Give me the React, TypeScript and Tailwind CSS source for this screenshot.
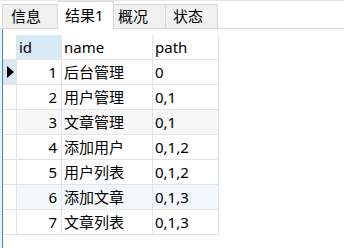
import React from "react";

const rows = [
  { id: 1, name: "后台管理", path: "0" },
  { id: 2, name: "用户管理", path: "0,1" },
  { id: 3, name: "文章管理", path: "0,1" },
  { id: 4, name: "添加用户", path: "0,1,2" },
  { id: 5, name: "用户列表", path: "0,1,2" },
  { id: 6, name: "添加文章", path: "0,1,3" },
  { id: 7, name: "文章列表", path: "0,1,3" },
];

export default function App() {
  const font = { fontFamily: '"Noto Sans", "Noto Sans CJK SC", sans-serif' };
  return (
    <div
      className="w-[344px] h-[248px] bg-white overflow-hidden flex flex-col text-[15px] text-black leading-none"
      style={font}
    >
      {/* tab bar */}
      <div className="h-[29px] shrink-0 flex items-end border-t border-t-[#e6e6e6] border-b border-b-[#d9d9d9] pl-[2px] bg-white">
        <div className="w-[56px] h-[25px] -mb-px bg-[#f0f0f0] border border-[#d9d9d9] flex items-center pl-[8px]">
          信息
        </div>
        <div className="w-[56px] h-[28px] -mb-px bg-white border border-b-0 border-[#d9d9d9] border-l-0 flex items-center pl-[7px] pb-[1px]">
          结果1
        </div>
        <div className="w-[52px] h-[25px] -mb-px bg-[#f0f0f0] border border-l-0 border-[#d9d9d9] flex items-center pl-[4px]">
          概况
        </div>
        <div className="w-[52px] h-[25px] -mb-px bg-[#f0f0f0] border border-l-0 border-[#d9d9d9] flex items-center pl-[7px]">
          状态
        </div>
      </div>

      {/* body */}
      <div className="flex-1 flex">
        <div className="w-[2px] bg-[#f0f0f0]" />
        <div className="w-px bg-[#2f8ae5]" />
        <div className="pt-[6px]">
          <div className="grid grid-cols-[14px_45px_91px_66px]">
            {/* header */}
            <div className="h-[25px] border-r border-b border-[#e3e3e3] bg-white" />
            <div className="h-[25px] border-r border-b border-[#e3e3e3] bg-[#d9e9f7] flex items-center pl-[2px]">
              id
            </div>
            <div className="h-[25px] border-r border-b border-[#e3e3e3] bg-white flex items-center pl-[2px]">
              name
            </div>
            <div className="h-[25px] border-r border-b border-[#e3e3e3] bg-white flex items-center pl-[2px]">
              path
            </div>
            {rows.map((r, i) => {
              const bg =
                r.id === 3 ? "bg-[#f7f7f7]" : r.id === 6 ? "bg-[#f3f8fd]" : "bg-white";
              return (
                <React.Fragment key={r.id}>
                  <div
                    className={
                      i === 0
                        ? "h-[25px] border-r border-b border-[#e3e3e3] bg-[#d9e9f7] flex items-center pl-[4px]"
                        : "h-[25px] border-r border-b border-[#e3e3e3] bg-white"
                    }
                  >
                    {i === 0 && (
                      <svg width="7" height="12" viewBox="0 0 7 12">
                        <path d="M0 0 L7 6 L0 12 Z" fill="#000" />
                      </svg>
                    )}
                  </div>
                  <div className={`h-[25px] border-r border-b border-[#e3e3e3] ${bg} flex items-center justify-end pr-[4px]`}>
                    {r.id}
                  </div>
                  <div className={`h-[25px] border-r border-b border-[#e3e3e3] ${bg} flex items-center pl-[2px]`}>
                    {r.name}
                  </div>
                  <div className={`h-[25px] border-r border-b border-[#e3e3e3] ${bg} flex items-center pl-[2px]`}>
                    {r.path}
                  </div>
                </React.Fragment>
              );
            })}
          </div>
        </div>
      </div>
    </div>
  );
}
